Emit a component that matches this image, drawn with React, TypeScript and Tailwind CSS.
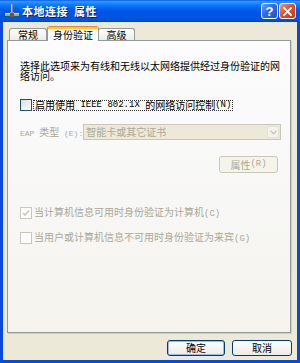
import React from "react";

function NetIcon() {
  return (
    <svg width="16" height="16" viewBox="0 0 16 16" className="shrink-0">
      <rect x="7" y="1" width="2" height="9" fill="#8A8A8A" />
      <rect x="7" y="1" width="1" height="9" fill="#D0D0D0" />
      <rect x="1" y="10" width="14" height="3" fill="#D8A800" />
      <rect x="1" y="10" width="14" height="1" fill="#FFE27A" />
      <rect x="6" y="9" width="4" height="5" fill="#5A5A5A" />
      <rect x="6" y="9" width="4" height="1" fill="#9A9A9A" />
    </svg>
  );
}

function TitleBar() {
  return (
    <div className="h-[22px] shrink-0 flex items-center pl-[4px] pr-[4px] bg-[linear-gradient(to_bottom,#0058EE_0%,#3A93FF_6%,#288EFF_12%,#127DFF_20%,#036FFC_30%,#0262EE_40%,#0057E5_50%,#0054E3_80%,#0050DA_92%,#0041C8_100%)]">
      <NetIcon />
      <span className="ml-[2px] text-[11px] font-bold text-white leading-none tracking-[0.5px] whitespace-pre [text-shadow:1px_1px_0_#0A1E7A]">
        本地连接  属性
      </span>
      <div className="ml-auto flex gap-[1px]">
        <div className="w-[17px] h-[16px] rounded-[3px] border border-white flex items-center justify-center bg-[linear-gradient(135deg,#6F9CF7_0%,#2E6BE6_45%,#1C52C9_100%)]">
          <span className="text-white font-bold text-[13px] leading-none font-['Liberation_Sans',sans-serif]">?</span>
        </div>
        <div className="w-[17px] h-[16px] rounded-[3px] border border-white flex items-center justify-center bg-[linear-gradient(135deg,#F09A80_0%,#E2512C_45%,#C43A14_100%)]">
          <svg width="9" height="9" viewBox="0 0 9 9">
            <path d="M1 1 L8 8 M8 1 L1 8" stroke="white" strokeWidth="1.8" strokeLinecap="square" />
          </svg>
        </div>
      </div>
    </div>
  );
}

function Tabs() {
  return (
    <div className="h-[14px] shrink-0 flex items-end pl-[2px]">
      <div className="w-[38px] h-[12px] border border-b-0 border-[#919B9C] rounded-t-[3px] bg-[linear-gradient(to_bottom,#FFFFFF,#ECEBE6)] flex items-center justify-center leading-none">
        常规
      </div>
      <div className="relative z-10 w-[52px] h-[15px] -mb-px border border-b-0 border-[#919B9C] border-t-[#E68B2C] rounded-t-[3px] bg-[#FCFCFE] flex flex-col items-center">
        <div className="w-full h-[2px] bg-[#FFC73C]" />
        <div className="flex-1 flex items-center leading-none">身份验证</div>
      </div>
      <div className="-ml-px w-[37px] h-[12px] border border-b-0 border-[#919B9C] rounded-t-[3px] bg-[linear-gradient(to_bottom,#FFFFFF,#ECEBE6)] flex items-center justify-center leading-none">
        高级
      </div>
    </div>
  );
}

function Box({ disabled, checked }: { disabled?: boolean; checked?: boolean }) {
  return (
    <div
      className={
        disabled
          ? "w-[12px] h-[12px] shrink-0 border border-[#CAC8BB] bg-white flex items-center justify-center"
          : "w-[12px] h-[12px] shrink-0 border border-[#1C5180] bg-[linear-gradient(135deg,#DCDCD7,#FFFFFF)]"
      }
    >
      {checked && (
        <svg width="8" height="8" viewBox="0 0 8 8">
          <path d="M1 4 L3 6 L7 1.5" stroke="#CAC8BB" strokeWidth="1.6" fill="none" />
        </svg>
      )}
    </div>
  );
}

function Panel() {
  return (
    <div className="relative w-[284px] h-[293px] shrink-0 border border-[#919B9C] shadow-[1px_1px_0_#D0CEBF] bg-[linear-gradient(to_bottom,#FCFCFE,#F4F3EE)] flex flex-col pl-3 pr-[10px] pt-[20px]">
      <p className="leading-[10px]">
        选择此选项来为有线和无线以太网络提供经过身份验证的网络访问。
      </p>

      <div className="mt-[18px] flex items-center h-[12px]">
        <Box />
        <span className="ml-px border border-dotted border-[#333] px-px h-[11px] flex items-center leading-none whitespace-nowrap">
          启用使用<span className="font-['Liberation_Mono',monospace] text-[9px]">&nbsp;IEEE 802.1X&nbsp;</span>的网络访问控制<span className="font-['Liberation_Mono',monospace] text-[9px]">(N)</span>
        </span>
      </div>

      <div className="mt-[13px] flex items-center h-[16px]">
        <span className="shrink-0 whitespace-nowrap text-[#ACA899] leading-none">
          <span className="font-['Liberation_Mono',monospace] text-[8px]">EAP </span>类型<span className="font-['Liberation_Mono',monospace] text-[8px]"> (E):</span>
        </span>
        <div className="ml-auto w-[198px] h-[16px] shrink-0 border border-[#C9C7BA] bg-[#ECE9D8] flex items-center">
          <span className="pl-[2px] text-[#ACA899] leading-none whitespace-nowrap">智能卡或其它证书</span>
          <div className="ml-auto mr-px w-[12px] h-[12px] bg-[#F3F2EC] border border-[#E3E1D6] flex items-center justify-center">
            <svg width="7" height="5" viewBox="0 0 7 5">
              <path d="M0.5 0.8 L3.5 3.8 L6.5 0.8" stroke="#C9C7BA" strokeWidth="1.4" fill="none" />
            </svg>
          </div>
        </div>
      </div>

      <div className="mt-[16px] self-end mr-[2px] w-[59px] h-[17px] rounded-[3px] border border-[#C9C7BA] bg-[#F5F4EA] flex items-center justify-center text-[#ACA899] leading-none">
        属性<span className="font-['Liberation_Mono',monospace] text-[9px]">(R)</span>
      </div>

      <div className="mt-[34px] flex items-center h-[12px]">
        <Box disabled checked />
        <span className="ml-[2px] text-[#ACA899] leading-none whitespace-nowrap">
          当计算机信息可用时身份验证为计算机<span className="font-['Liberation_Mono',monospace] text-[9px]">(C)</span>
        </span>
      </div>

      <div className="mt-[13px] flex items-center h-[12px]">
        <Box disabled />
        <span className="ml-[2px] text-[#ACA899] leading-none whitespace-nowrap">
          当用户或计算机信息不可用时身份验证为来宾<span className="font-['Liberation_Mono',monospace] text-[9px]">(G)</span>
        </span>
      </div>
    </div>
  );
}

export default function App() {
  return (
    <div className="w-[300px] h-[363px] flex flex-col overflow-hidden font-['Noto_Sans_CJK_SC',sans-serif] text-[10px] text-black">
      <TitleBar />
      <div className="flex-1 flex flex-col bg-[#ECE9D8] border-x-[3px] border-b-[3px] border-[#0A4ADB] pl-1 pt-1">
        <Tabs />
        <Panel />
        <div className="mt-[7px] flex justify-end gap-[7px] pr-[5px]">
          <div className="w-[58px] h-[16px] rounded-[3px] border border-[#003C74] bg-[linear-gradient(to_bottom,#FFFFFF,#ECEBE6)] shadow-[inset_0_0_0_1px_#9DB9EB] flex items-center justify-center leading-none">
            确定
          </div>
          <div className="w-[60px] h-[16px] rounded-[3px] border border-[#003C74] bg-[linear-gradient(to_bottom,#FFFFFF,#ECEBE6)] flex items-center justify-center leading-none">
            取消
          </div>
        </div>
      </div>
    </div>
  );
}
